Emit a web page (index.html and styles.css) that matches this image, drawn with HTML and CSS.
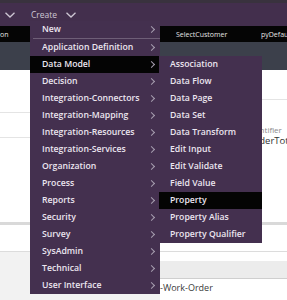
FILE: index.html
```html
<!DOCTYPE html>
<html lang="en">
<head>
    <meta charset="UTF-8">
    <meta name="viewport" content="width=device-width, initial-scale=1.0">
    <title>Create Menu</title>
    <link rel="stylesheet" href="styles.css">
</head>
<body>
    <div class="screen">
        <header class="topbar">
            <span class="caret caret-first">
                <svg width="10" height="6" viewBox="0 0 10 6"><polyline points="0.5,0.8 5,5 9.5,0.8" /></svg>
            </span>
            <span class="nav-label">Create</span>
            <span class="caret">
                <svg width="10" height="6" viewBox="0 0 10 6"><polyline points="0.5,0.8 5,5 9.5,0.8" /></svg>
            </span>
        </header>

        <div class="tabbar">
            <span class="tab tab-first">on</span>
            <span class="tab tab-select">SelectCustomer</span>
            <span class="tab">pyDefault</span>
        </div>

        <div class="toolbar"></div>

        <main class="content">
            <div class="form">
                <div class="form-left">
                    <div class="field field-a"></div>
                    <div class="field field-b"></div>
                </div>
                <div class="form-right">
                    <div class="field field-c"></div>
                    <div class="label">Identifier</div>
                    <div class="value">OrderTotal</div>
                </div>
            </div>
            <div class="divider"></div>
            <div class="section"></div>
            <div class="footer">
                <div class="footer-left"></div>
                <div class="footer-right">
                    <div class="strip"></div>
                    <div class="band"></div>
                    <div class="input">-Work-Order</div>
                </div>
            </div>
        </main>

        <nav class="menu menu-main">
            <div class="item">New<span class="chev"></span></div>
            <div class="separator"></div>
            <div class="item">Application Definition<span class="chev"></span></div>
            <div class="item active">Data Model<span class="chev"></span></div>
            <div class="item">Decision<span class="chev"></span></div>
            <div class="item">Integration-Connectors<span class="chev"></span></div>
            <div class="item">Integration-Mapping<span class="chev"></span></div>
            <div class="item">Integration-Resources<span class="chev"></span></div>
            <div class="item">Integration-Services<span class="chev"></span></div>
            <div class="item">Organization<span class="chev"></span></div>
            <div class="item">Process<span class="chev"></span></div>
            <div class="item">Reports<span class="chev"></span></div>
            <div class="item">Security<span class="chev"></span></div>
            <div class="item">Survey<span class="chev"></span></div>
            <div class="item">SysAdmin<span class="chev"></span></div>
            <div class="item">Technical<span class="chev"></span></div>
            <div class="item">User Interface<span class="chev"></span></div>
        </nav>

        <nav class="menu menu-sub">
            <div class="item">Association</div>
            <div class="item">Data Flow</div>
            <div class="item">Data Page</div>
            <div class="item">Data Set</div>
            <div class="item">Data Transform</div>
            <div class="item">Edit Input</div>
            <div class="item">Edit Validate</div>
            <div class="item">Field Value</div>
            <div class="item active">Property</div>
            <div class="item">Property Alias</div>
            <div class="item">Property Qualifier</div>
        </nav>
    </div>
</body>
</html>
```

FILE: styles.css
```css
body {
    margin: 0;
    font-family: "Open Sans", "DejaVu Sans", sans-serif;
    background-color: #ffffff;
}

.screen {
    position: relative;
    width: 287px;
    height: 300px;
    overflow: hidden;
    display: flex;
    flex-direction: column;
}

/* top navigation */

.topbar {
    height: 23px;
    border-top: 3px solid #39323e;
    background-color: #432f4d;
    display: flex;
    align-items: center;
    color: #cdc6d3;
    font-size: 8.5px;
}

.caret {
    display: flex;
    padding-top: 1px;
}

.caret svg polyline {
    fill: none;
    stroke: #cdc6d3;
    stroke-width: 1.3;
}

.caret-first {
    margin-left: 5px;
    margin-right: 16px;
}

.nav-label {
    margin-right: 9px;
}

.tabbar {
    height: 16px;
    background-color: #050505;
    display: flex;
    align-items: center;
    color: #e4e4e4;
    font-size: 7px;
    white-space: nowrap;
}

.tab-first {
    width: 176px;
    flex-shrink: 0;
}

.tab-select {
    width: 85px;
    flex-shrink: 0;
}

.toolbar {
    height: 28px;
    background-color: #3c404b;
}

/* page behind the menu */

.content {
    flex: 1;
    display: flex;
    flex-direction: column;
}

.form {
    height: 152px;
    display: flex;
}

.form-left {
    width: 160px;
    flex-shrink: 0;
}

.field {
    border-bottom: 1px solid #e4e4e4;
}

.field-a {
    height: 42px;
}

.field-b {
    height: 24px;
}

.form-right {
    flex: 1;
    min-width: 0;
    padding-left: 88px;
    white-space: nowrap;
}

.field-c {
    height: 29px;
    margin-left: -88px;
    margin-bottom: 24px;
}

.label {
    color: #8a8a8a;
    font-size: 8px;
    line-height: 11px;
}

.value {
    color: #333333;
    font-size: 9.5px;
    line-height: 12px;
}

.divider {
    height: 3px;
    background-color: #d9d9d9;
}

.section {
    height: 26px;
    border-bottom: 1px solid #dcdcdc;
}

.footer {
    flex: 1;
    display: flex;
    background-color: #f2f2f2;
}

.footer-left {
    width: 160px;
    flex-shrink: 0;
}

.footer-right {
    flex: 1;
    display: flex;
    flex-direction: column;
}

.strip {
    height: 9px;
    background-color: #ffffff;
}

.band {
    height: 17px;
    background-color: #ececec;
}

.input {
    flex: 1;
    background-color: #ffffff;
    border-top: 1px solid #cfcfcf;
    color: #3a3a3a;
    font-size: 9px;
    line-height: 18px;
}

/* create menu */

.menu {
    position: absolute;
    background-color: #44304f;
    color: #ece6f0;
    font-size: 8.7px;
    font-weight: 600;
    white-space: nowrap;
}

.menu-main {
    left: 30px;
    top: 21px;
    width: 130px;
}

.menu-sub {
    left: 159px;
    top: 56px;
    width: 103px;
}

.item {
    height: 17px;
    line-height: 17px;
    display: flex;
    align-items: center;
    padding-left: 12px;
}

.menu-sub .item {
    padding-left: 11px;
}

.item.active {
    background-color: #040404;
}

.separator {
    height: 1px;
    margin-left: 3px;
    background-color: #6e5e77;
}

.chev {
    margin-left: auto;
    margin-right: 4px;
    width: 4px;
    height: 4px;
    border-top: 1px solid #a79eb0;
    border-right: 1px solid #a79eb0;
    transform: translateX(-2px) rotate(45deg);
}
```
